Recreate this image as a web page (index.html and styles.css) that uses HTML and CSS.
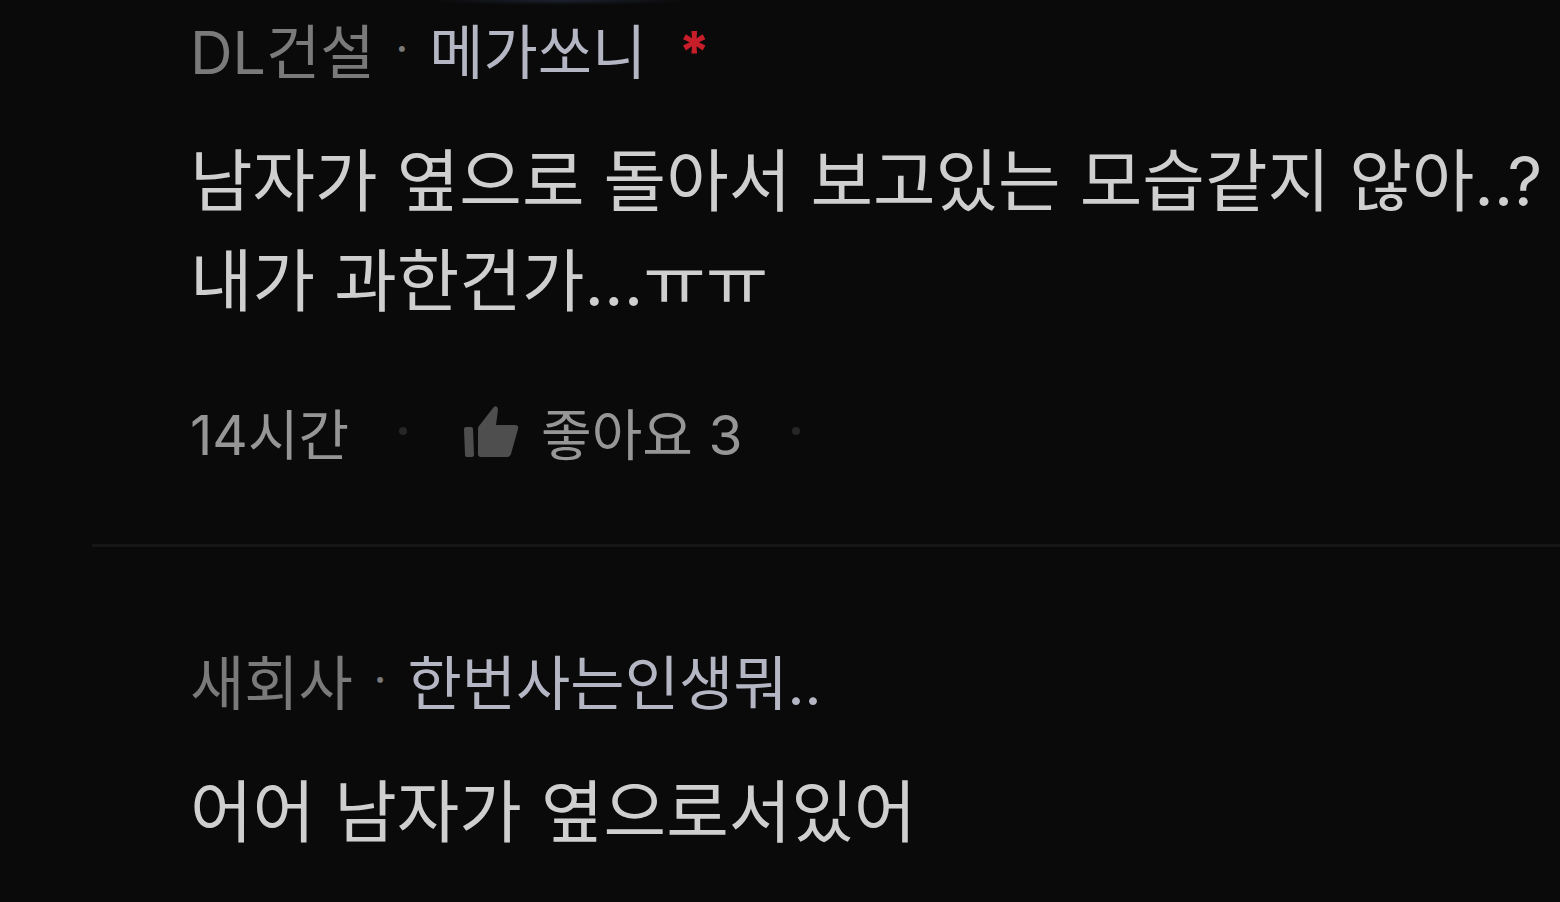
FILE: index.html
```html
<!DOCTYPE html>
<html lang="ko">
<head>
    <meta charset="UTF-8">
    <meta name="viewport" content="width=device-width, initial-scale=1.0">
    <title>댓글</title>
    <link rel="stylesheet" href="styles.css">
</head>
<body>
    <main class="comments">
        <article class="comment">
            <header class="author">
                <span class="company">DL건설</span>
                <span class="dot">·</span>
                <a class="nickname" href="#">메가쏘니</a>
                <span class="mark">*</span>
            </header>
            <p class="text">남자가 옆으로 돌아서 보고있는 모습같지 않아..?<br>내가 과한건가...ㅠㅠ</p>
            <footer class="meta">
                <time>14시간</time>
                <span class="separator"></span>
                <button class="like" type="button">
                    <svg class="thumb" viewBox="0 0 56 54" aria-hidden="true">
                        <path d="M1 25q0-2 2-2h5q2 0 2 2l1 26q0 2-2 2H4q-2 0-2-2z"/>
                        <path d="M15 25q0-2 1-3L30 4q2-3 4-1 1 1 1 3l-2 15h19q4 0 3 4l-7 25q-1 3-4 3H18q-3 0-3-3z"/>
                    </svg>
                    <span>좋아요 3</span>
                </button>
                <span class="separator"></span>
            </footer>
        </article>
        <article class="comment">
            <header class="author">
                <span class="company">새회사</span>
                <span class="dot">·</span>
                <a class="nickname" href="#">한번사는인생뭐..</a>
            </header>
            <p class="text">어어 남자가 옆으로서있어</p>
        </article>
    </main>
</body>
</html>
```

FILE: styles.css
```css
body {
    margin: 0;
    background: #0a0a0a;
    color: #cfcfcf;
    font-family: Inter, "Noto Sans CJK KR", sans-serif;
    overflow: hidden;
}

.comments {
    padding-left: 92px;
    background: radial-gradient(130px 5px at 560px 0, #1c2230, transparent) no-repeat;
}

.comment {
    padding: 8px 0 0 98px;
}

.comment + .comment {
    padding-top: 92px;
    border-top: 3px solid #161616;
}

.author {
    display: flex;
    align-items: center;
    height: 80px;
    font-size: 59px;
    white-space: nowrap;
}

.company {
    color: #7a7a7a;
}

.dot {
    margin: 0 21px;
    color: #7a7a7a;
    font-size: 44px;
}

.nickname {
    color: #b4b6c4;
    text-decoration: none;
}

.mark {
    margin-left: 32px;
    color: #c81e2a;
    font-size: 55px;
    font-weight: 800;
    line-height: 80px;
    padding-top: 6px;
}

.text {
    margin: 43px 0 0;
    font-size: 68px;
    line-height: 100px;
    white-space: nowrap;
}

.meta {
    display: flex;
    align-items: center;
    height: 80px;
    margin: 60px 0 73px;
    color: #969696;
    font-size: 55px;
}

.separator {
    width: 8px;
    height: 8px;
    margin: 0 50px;
    border-radius: 50%;
    background: #262626;
}

.like {
    display: flex;
    align-items: center;
    gap: 22px;
    margin-left: 6px;
    padding: 0;
    border: 0;
    background: none;
    color: inherit;
    font: inherit;
    cursor: pointer;
}

.thumb {
    width: 56px;
    height: 54px;
    fill: #4e4e4e;
}
```
